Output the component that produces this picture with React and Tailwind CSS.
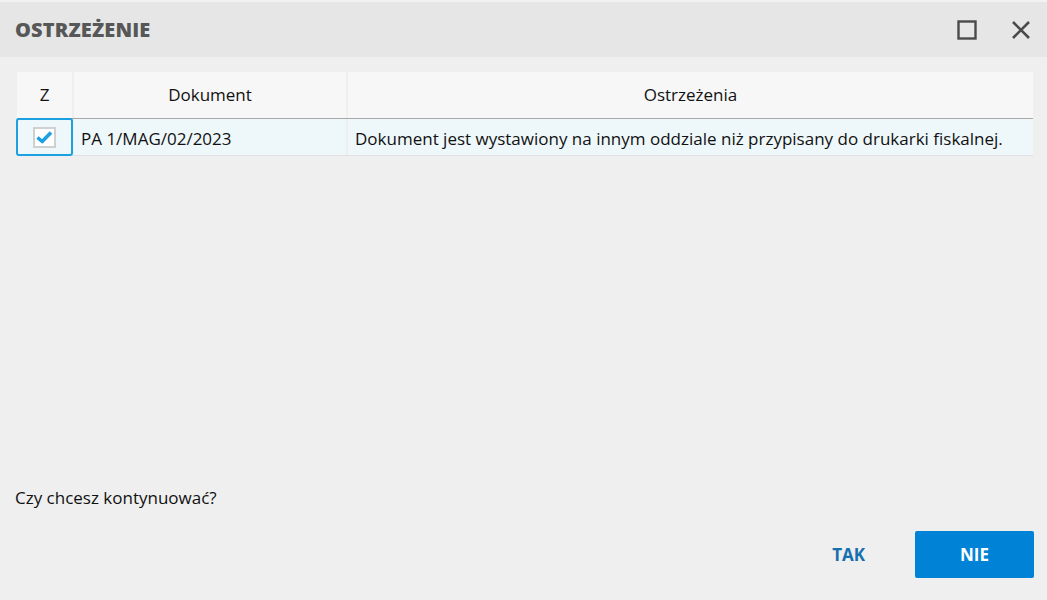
import React, { useState } from "react";

const font = { fontFamily: '"Open Sans", "Noto Sans", sans-serif' };

const MaximizeIcon = () => (
  <svg width="20" height="20" viewBox="0 0 20 20" fill="none">
    <rect x="1.5" y="1.5" width="17" height="17" stroke="#4a4a4a" strokeWidth="2.4" />
  </svg>
);

const CloseIcon = () => (
  <svg width="20" height="20" viewBox="0 0 20 20" fill="none">
    <path d="M2 2 L18 18 M18 2 L2 18" stroke="#4a4a4a" strokeWidth="2.6" />
  </svg>
);

const CheckBox = ({ checked, onToggle }) => (
  <button
    type="button"
    onClick={onToggle}
    className="w-[23px] h-[21px] border-2 border-[#d0d0d0] bg-white flex items-center justify-center"
  >
    {checked && (
      <svg width="17" height="14" viewBox="0 0 17 14">
        <path d="M1.5 7.5 L6.2 11.5 L15 2.5" fill="none" stroke="#1ba1e2" strokeWidth="3.6" strokeLinejoin="round" />
      </svg>
    )}
  </button>
);

const App = () => {
  const [checked, setChecked] = useState(true);

  return (
    <div className="w-[1047px] h-[600px] bg-[#efefef] flex flex-col text-[#111111]" style={font}>
      {/* header */}
      <div className="h-[2px] bg-[#f2f2f2]" />
      <div className="h-[55px] bg-[#e6e6e6] flex items-center pl-[15px] pr-[16px]">
        <h1 className="text-[20px] font-extrabold text-[#575757] tracking-[0.15px] flex-1">OSTRZEŻENIE</h1>
        <div className="flex items-center gap-[34px]">
          <MaximizeIcon />
          <CloseIcon />
        </div>
      </div>

      {/* table */}
      <div className="px-[17px] pt-[15px] pr-[14px]">
        <div className="flex gap-[2px] h-[46px] text-[17px]">
          <div className="w-[55px] bg-[#f7f7f7] flex items-center justify-center">Z</div>
          <div className="w-[272px] bg-[#f7f7f7] flex items-center justify-center">Dokument</div>
          <div className="flex-1 bg-[#f7f7f7] flex items-center justify-center">Ostrzeżenia</div>
        </div>
        <div className="h-px bg-[#a8a8a8]" />
        <div className="flex gap-[2px] h-[37px] text-[17px] border-b border-[#e2e2e2]">
          <div className="w-[55px] bg-[#eef7fa] flex items-center justify-center outline-2 outline-[#1ba1e2] -outline-offset-1 rounded-[2px]">
            <CheckBox checked={checked} onToggle={() => setChecked(!checked)} />
          </div>
          <div className="w-[272px] bg-[#eef7fa] flex items-center pl-[7px] pt-[3px]">PA 1/MAG/02/2023</div>
          <div className="flex-1 bg-[#eef7fa] flex items-center pl-[7px] pt-[3px] whitespace-nowrap">
            Dokument jest wystawiony na innym oddziale niż przypisany do drukarki fiskalnej.
          </div>
        </div>
      </div>

      <div className="flex-1" />

      <p className="px-[15px] text-[17px] leading-none">Czy chcesz kontynuować?</p>

      <div className="flex justify-end items-center gap-[50px] pr-[13px] pt-[25px] pb-[22px]">
        <button type="button" className="text-[17px] font-bold text-[#1670ae]">TAK</button>
        <button
          type="button"
          className="w-[119px] h-[47px] bg-[#0083d7] rounded-[2px] text-white text-[17px] font-bold"
        >
          NIE
        </button>
      </div>
    </div>
  );
};

export default App;
